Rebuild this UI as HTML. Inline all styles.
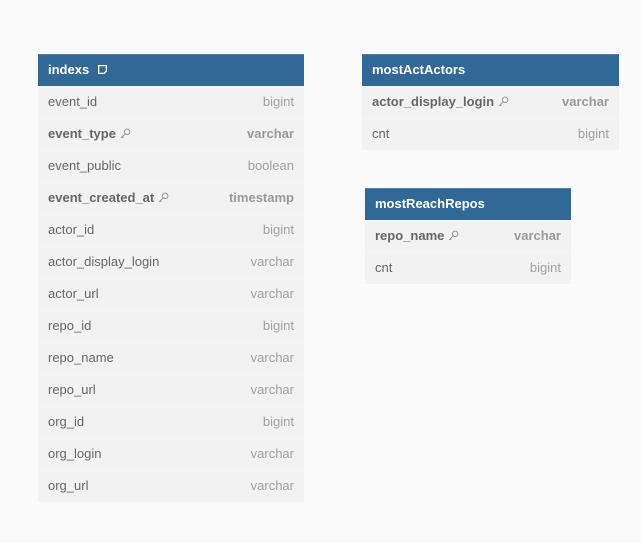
<!DOCTYPE html>
<html><head><style>
body{margin:0;width:641px;height:543px;background:#fafafa;font-family:"Liberation Sans",sans-serif;position:relative;overflow:hidden}
.t{position:absolute;background:#f2f2f2}
.h{height:32px;background:#316896;color:#fff;font-weight:bold;font-size:13px;line-height:29px;padding:0 10px;border-top:1px solid #4f80a8;box-sizing:border-box}
.r{height:32px;line-height:30px;font-size:13px;color:#666;padding:0 10px;display:flex;justify-content:space-between;border-top:1px solid #f6f6f6;box-sizing:border-box}
.r span:last-child{color:#a0a0a0}
.b{font-weight:bold}
.b span:last-child{color:#999}
.k{display:inline-block;width:11px;height:11px;vertical-align:-1px;margin-left:4px}
</style></head><body>
<div class="t" style="left:38px;top:54px;width:266px">
<div class="h">indexs <svg class="k" viewBox="0 0 10 10"><path d="M1.5 1.5h7v5l-2 2h-5z" fill="none" stroke="#fff" stroke-width="1.2"/></svg></div>
<div class="r"><span>event_id</span><span>bigint</span></div>
<div class="r b"><span>event_type<svg class="k" viewBox="0 0 10 10"><circle cx="6.5" cy="3.5" r="2.5" fill="none" stroke="#888" stroke-width=".8"/><path d="M5 5L1 9M2 8l1 1" stroke="#888" stroke-width=".8" fill="none"/></svg></span><span>varchar</span></div>
<div class="r"><span>event_public</span><span>boolean</span></div>
<div class="r b"><span>event_created_at<svg class="k" viewBox="0 0 10 10"><circle cx="6.5" cy="3.5" r="2.5" fill="none" stroke="#888" stroke-width=".8"/><path d="M5 5L1 9M2 8l1 1" stroke="#888" stroke-width=".8" fill="none"/></svg></span><span>timestamp</span></div>
<div class="r"><span>actor_id</span><span>bigint</span></div>
<div class="r"><span>actor_display_login</span><span>varchar</span></div>
<div class="r"><span>actor_url</span><span>varchar</span></div>
<div class="r"><span>repo_id</span><span>bigint</span></div>
<div class="r"><span>repo_name</span><span>varchar</span></div>
<div class="r"><span>repo_url</span><span>varchar</span></div>
<div class="r"><span>org_id</span><span>bigint</span></div>
<div class="r"><span>org_login</span><span>varchar</span></div>
<div class="r"><span>org_url</span><span>varchar</span></div>
</div>
<div class="t" style="left:362px;top:54px;width:257px">
<div class="h">mostActActors</div>
<div class="r b"><span>actor_display_login<svg class="k" viewBox="0 0 10 10"><circle cx="6.5" cy="3.5" r="2.5" fill="none" stroke="#888" stroke-width=".8"/><path d="M5 5L1 9M2 8l1 1" stroke="#888" stroke-width=".8" fill="none"/></svg></span><span>varchar</span></div>
<div class="r"><span>cnt</span><span>bigint</span></div>
</div>
<div class="t" style="left:365px;top:188px;width:206px">
<div class="h">mostReachRepos</div>
<div class="r b"><span>repo_name<svg class="k" viewBox="0 0 10 10"><circle cx="6.5" cy="3.5" r="2.5" fill="none" stroke="#888" stroke-width=".8"/><path d="M5 5L1 9M2 8l1 1" stroke="#888" stroke-width=".8" fill="none"/></svg></span><span>varchar</span></div>
<div class="r"><span>cnt</span><span>bigint</span></div>
</div>
</body></html>
